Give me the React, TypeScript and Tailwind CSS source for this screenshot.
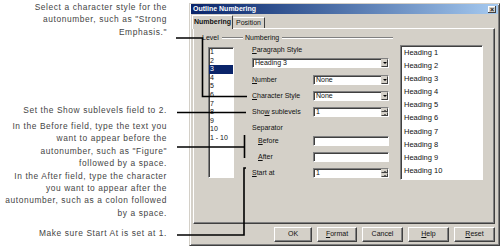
import React from 'react';

const ui = "font-['Liberation_Sans_Narrow','Liberation_Sans',Arial,sans-serif]";
const raised =
  'border border-t-white border-l-white border-r-[#404040] border-b-[#404040] shadow-[inset_-1px_-1px_#808080]';
const sunken =
  'border border-t-[#808080] border-l-[#808080] border-r-white border-b-white shadow-[inset_1px_1px_#404040]';

const levels = ['1', '2', '3', '4', '5', '6', '7', '8', '9', '10', '1 - 10'];
const headings = Array.from({ length: 10 }, (_, i) => `Heading ${i + 1}`);

function U({ children }: { children: React.ReactNode }) {
  return <span className="underline underline-offset-[1px]">{children}</span>;
}

function DropArrow() {
  return (
    <div className="flex h-full w-[7px] shrink-0 items-center justify-center border border-t-[#d4d0c8] border-l-[#d4d0c8] border-r-[#404040] border-b-[#404040] bg-[#d4d0c8]">
      <div className="h-0 w-0 border-x-[2px] border-t-[2px] border-x-transparent border-t-black" />
    </div>
  );
}

function SpinArrows() {
  return (
    <div className="flex h-full w-[7px] shrink-0 flex-col bg-[#d4d0c8]">
      <div className="flex flex-1 items-center justify-center border border-t-[#d4d0c8] border-l-[#d4d0c8] border-r-[#404040] border-b-[#404040]">
        <div className="h-0 w-0 border-x-[1.5px] border-b-[1.5px] border-x-transparent border-b-black" />
      </div>
      <div className="flex flex-1 items-center justify-center border border-t-[#d4d0c8] border-l-[#d4d0c8] border-r-[#404040] border-b-[#404040]">
        <div className="h-0 w-0 border-x-[1.5px] border-t-[1.5px] border-x-transparent border-t-black" />
      </div>
    </div>
  );
}

function Field({ value, kind }: { value?: string; kind?: 'drop' | 'spin' }) {
  return (
    <div className={`flex h-full w-full items-center bg-white ${sunken}`}>
      <span className="flex-1 truncate pl-[2px] text-[7px] leading-[8px]">{value}</span>
      {kind === 'drop' && <DropArrow />}
      {kind === 'spin' && <SpinArrows />}
    </div>
  );
}

function Row({ label, value, kind, indent = false }: { label: React.ReactNode; value?: string; kind?: 'drop' | 'spin'; indent?: boolean }) {
  return (
    <div className={`flex h-[10px] items-center pr-[4px] ${indent ? 'pl-[13px]' : 'pl-[7px]'}`}>
      <span className="flex-1 text-[7px] leading-[8px]">{label}</span>
      <div className="h-full w-[76px]">
        <Field value={value} kind={kind} />
      </div>
    </div>
  );
}

function Header({ label, pl = '' }: { label: string; pl?: string }) {
  return (
    <div className={`flex h-[8px] items-center ${pl}`}>
      <span className="text-[7px] leading-[8px]">{label}</span>
      <div className="ml-[3px] h-[2px] flex-1 border-t border-b border-t-[#808080] border-b-white" />
    </div>
  );
}

function Button({ label, w }: { label: React.ReactNode; w: string }) {
  return (
    <div className={`flex h-[15px] items-center justify-center bg-[#d4d0c8] text-[7px] ${raised} ${w}`}>{label}</div>
  );
}

export default function App() {
  return (
    <div className="relative flex h-[249px] w-[500px] overflow-hidden bg-white">
      <div className="w-[167px] shrink-0 whitespace-nowrap pt-[1px] text-right font-['Liberation_Sans',Arial,sans-serif] text-[8.4px] leading-[12.4px] tracking-[0.6px] text-[#444]">
        <p>
          Select a character style for the
          <br />
          autonumber, such as "Strong
          <br />
          Emphasis."
        </p>
        <p className="mt-[65.6px]">Set the Show sublevels field to 2.</p>
        <p className="mt-[3.8px]">
          In the Before field, type the text you
          <br />
          want to appear before the
          <br />
          autonumber, such as "Figure"
          <br />
          followed by a space.
        </p>
        <p className="mt-0">
          In the After field, type the character
          <br />
          you want to appear after the
          <br />
          autonumber, such as a colon followed
          <br />
          by a space.
        </p>
        <p className="mt-[7.4px]">Make sure Start At is set at 1.</p>
      </div>

      <div
        className={`ml-[22px] mt-[3px] h-[243px] w-[311px] shrink-0 bg-[#d4d0c8] text-[#111] ${ui} border border-t-[#d4d0c8] border-l-[#d4d0c8] border-r-[#404040] border-b-[#404040] shadow-[inset_1px_1px_white,inset_-1px_-1px_#808080]`}
      >
        <div className="mx-[1px] flex h-[10px] items-center justify-between bg-gradient-to-r from-[#0a246a] to-[#a6caf0] pl-[2px] pr-[2px]">
          <span className="text-[7px] font-bold leading-[8px] text-white">Outline Numbering</span>
          <div className="flex h-[7px] w-[8px] items-center justify-center bg-[#d4d0c8] text-[7px] font-bold leading-none shadow-[inset_-1px_-1px_#404040,inset_1px_1px_white]">
            ×
          </div>
        </div>

        <div className="ml-[2px] mt-[1px] flex h-[13px] items-end">
          <div className="relative z-10 -mb-px flex h-[14px] w-[41px] items-center justify-center rounded-t-[1px] border border-b-0 border-t-white border-l-white border-r-[#404040] bg-[#d4d0c8] text-[7px] font-bold">
            Numbering
          </div>
          <div className="flex h-[11px] w-[32px] items-center justify-center rounded-t-[1px] border border-b-0 border-t-white border-l-0 border-r-[#404040] text-[7px]">
            Position
          </div>
        </div>

        <div className={`ml-[3px] flex h-[196px] w-[302px] pt-[5px] ${raised}`}>
          <div className="w-[49px] shrink-0">
            <Header label="Level" pl="pl-[8px]" />
            <div className={`ml-[14px] mt-[5px] h-[131px] w-[26px] bg-white ${sunken}`}>
              {levels.map((l, i) => (
                <div
                  key={l}
                  className={`h-[8.6px] pl-[1px] text-[7px] leading-[8.6px] ${i === 2 ? 'bg-[#0a246a] text-white' : ''}`}
                >
                  {l}
                </div>
              ))}
            </div>
          </div>

          <div className="ml-[2px] w-[148px] shrink-0">
            <Header label="Numbering" />
            <div className="mt-[4px] h-[8px] pl-[7px] text-[7px] leading-[8px]">
              <U>P</U>aragraph Style
            </div>
            <div className="mt-[4px] h-[10px] pl-[7px] pr-[4px]">
              <Field value="Heading 3" kind="drop" />
            </div>
            <div className="mt-[7px]">
              <Row label={<><U>N</U>umber</>} value="None" kind="drop" />
            </div>
            <div className="mt-[6px]">
              <Row label={<><U>C</U>haracter Style</>} value="None" kind="drop" />
            </div>
            <div className="mt-[6px]">
              <Row label={<>Sho<U>w</U> sublevels</>} value="1" kind="spin" />
            </div>
            <div className="mt-[6.5px] h-[8px] pl-[7px] text-[7px] leading-[8px]">Separator</div>
            <div className="mt-[4.5px]">
              <Row label={<><U>B</U>efore</>} indent />
            </div>
            <div className="mt-[6px]">
              <Row label={<><U>A</U>fter</>} indent />
            </div>
            <div className="mt-[6px]">
              <Row label={<><U>S</U>tart at</>} value="1" kind="spin" />
            </div>
          </div>

          <div className={`ml-[7px] mt-[11px] h-[135px] w-[83px] shrink-0 bg-white ${sunken}`}>
            {headings.map((h) => (
              <div key={h} className="h-[13.1px] pl-[3px] text-[7.5px] leading-[13.1px]">
                {h}
              </div>
            ))}
          </div>
        </div>

        <div className="ml-[3px] mt-[3px] flex w-[302px] justify-end gap-[5px]">
          <Button label="OK" w="w-[38px]" />
          <Button label={<><U>F</U>ormat</>} w="w-[40px]" />
          <Button label="Cancel" w="w-[41px]" />
          <Button label={<><U>H</U>elp</>} w="w-[41px]" />
          <Button label={<><U>R</U>eset</>} w="w-[41px]" />
        </div>
      </div>

      <svg className="pointer-events-none absolute inset-0" width="500" height="249" viewBox="0 0 500 249">
        <g fill="none" stroke="#000" strokeWidth="1.6">
          <polyline points="176,38 202.5,38 202.5,96.5 247,96.5" />
          <line x1="177" y1="112.5" x2="246" y2="112.5" />
          <line x1="177" y1="147" x2="244.5" y2="147" />
          <line x1="244.5" y1="135" x2="244.5" y2="158" />
          <polyline points="177,235 244,235 244,168 246,168" />
        </g>
      </svg>
    </div>
  );
}
